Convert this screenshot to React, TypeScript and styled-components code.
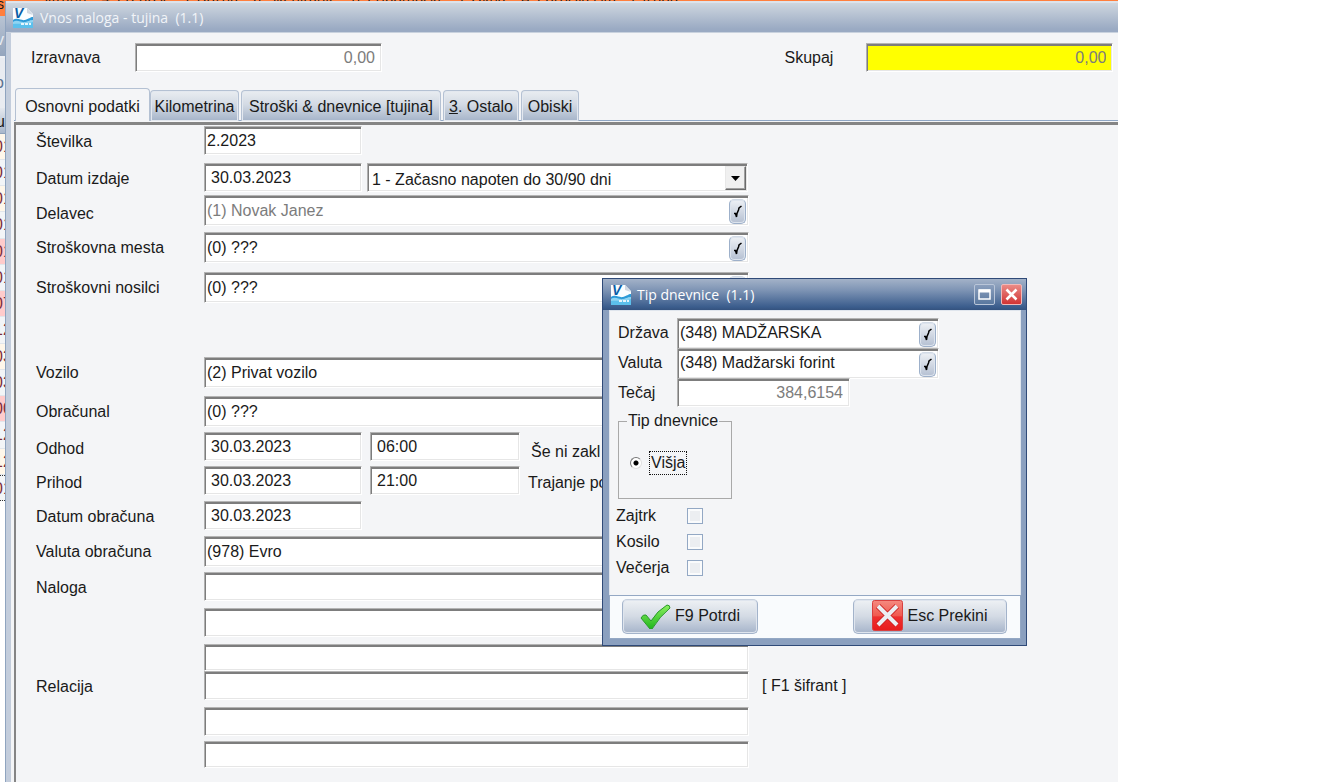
import React, { useId } from "react";
import styled, { createGlobalStyle, css } from "styled-components";

const Global = createGlobalStyle`
  * { box-sizing: border-box; }
  body { margin: 0; background: #fff; }
  body, input, select, button, legend {
    font-family: "Liberation Sans", Arial, sans-serif;
    font-size: 16px;
    line-height: 20px;
    color: #1a1a1a;
  }
`;

const Screen = styled.div`
  display: flex;
  flex-direction: column;
  width: 84.35%;
  min-height: 100vh;
  position: relative;
`;

const MenuStrip = styled.nav`
  display: flex;
  gap: 15px;
  align-items: flex-end;
  height: 1px;
  padding-left: 40px;
  overflow: hidden;
  background: #ff7f3e;
  font-family: "Open Sans", sans-serif;
  font-size: 14px;
  line-height: 6px;
  white-space: nowrap;
`;

const Workspace = styled.div`
  flex: 1;
  display: flex;
`;

const Behind = styled.div`
  width: 5px;
  flex: none;
  overflow: hidden;
  white-space: nowrap;
`;

const BehindMenu = styled.div`
  height: 15px;
  background: #ff7f3e;
  font-size: 14px;
  line-height: 7px;
  text-indent: -3px;
`;

const BehindTitle = styled.div`
  height: 42px;
  border-bottom: 2px solid #eef1f5;
  background: linear-gradient(#b9c4d3, #94a5bd);
  color: #e8edf3;
  text-indent: -4px;
  line-height: 48px;
`;

const BehindBar = styled.div`
  height: 50px;
  background: #e9ecf1;
  color: #5a7290;
  text-indent: -5px;
  line-height: 50px;
`;

const BehindHead = styled.div`
  height: 26px;
  background: linear-gradient(#e4e8ee, #a9b7cb);
  border-bottom: 1px solid #8ea1b9;
  text-indent: -4px;
  line-height: 28px;
`;

const tones = { cream: "#fff7ea", plain: "#f3f5f7", pink: "#ffcbcb" };

const BehindRow = styled.div<{ $tone: keyof typeof tones }>`
  height: 26px;
  background: ${(p) => tones[p.$tone]};
  border-bottom: 1px solid #e2e6eb;
  color: #7c2c3a;
  text-indent: -6px;
  line-height: 26px;
  &:nth-child(4n) {
    height: 27px;
  }
  &:last-child {
    border-top: 1px dotted #333;
    border-bottom: 1px dotted #333;
  }
`;

const MainWindow = styled.section`
  flex: 1;
  min-width: 0;
  display: flex;
  flex-direction: column;
  border-left: 1px solid #8fa4bf;
`;

const TitleBar = styled.header<{ $active?: boolean }>`
  display: flex;
  align-items: center;
  gap: 7px;
  font-family: "Open Sans", "Noto Sans", sans-serif;
  font-size: 14px;
  white-space: pre;
  ${(p) =>
    p.$active
      ? css`
          height: 31px;
          gap: 6px;
          padding: 0 4px 0 8px;
          color: #fff;
          background: linear-gradient(#a3b2c8, #7f95b5 35%, #3b5d8d 90%, #34527f);
        `
      : css`
          height: 32px;
          padding: 0 7px;
          color: #f1f4f8;
          border-top: 2px solid #dde3eb;
          border-bottom: 1px solid #c9d2de;
          background: linear-gradient(#ced6df, #9aaac3 90%);
        `}
`;

const Caption = styled.h1`
  flex: 1;
  margin: 0;
  font-size: 14px;
  font-weight: 400;
`;

const Body = styled.div`
  flex: 1;
  display: flex;
  flex-direction: column;
  border-left: 5px solid #c3cddc;
  background: #f4f5f7;
  padding: 10px 0 0 3px;
`;

const Totals = styled.div`
  display: flex;
  justify-content: space-between;
  padding: 0 5px 0 17px;
`;

const Total = styled.div<{ $label: number }>`
  display: flex;
  align-items: center;
  label {
    width: ${(p) => p.$label}px;
  }
`;

const sunken = css`
  border: 1px solid;
  border-color: #b4b4b4 #fff #fff #b0b0b0;
  box-shadow: inset 1px 2px 0 #7d7d7d, inset -1px -1px 0 #e6e6e6;
  background: #fff;
  border-radius: 0;
`;

const Input = styled.input<{
  $w: number;
  $dim?: boolean;
  $right?: boolean;
  $indent?: number;
  $yellow?: boolean;
  $h?: number;
}>`
  ${sunken}
  width: ${(p) => p.$w}px;
  height: ${(p) => p.$h ?? 29}px;
  padding: 2px 6px 2px ${(p) => p.$indent ?? 2}px;
  outline: 0;
  ${(p) => p.$dim && "color: #7c7c7c;"}
  ${(p) => p.$right && "text-align: right;"}
  ${(p) => p.$yellow && "background: #ff0;"}
`;

const LookupBox = styled.div<{ $w: number }>`
  ${sunken}
  display: flex;
  align-items: center;
  width: ${(p) => p.$w}px;
  height: 31px;
  padding: 2px 2px 0 2px;
`;

const LookupInput = styled.input<{ $dim?: boolean }>`
  flex: 1;
  min-width: 0;
  border: 0;
  outline: 0;
  padding: 0 0 2px;
  background: none;
  color: ${(p) => (p.$dim ? "#7c7c7c" : "#1a1a1a")};
`;

const LookupButton = styled.button`
  display: flex;
  align-items: center;
  justify-content: center;
  width: 17px;
  height: 25px;
  padding: 0;
  border: 1px solid #9db0ca;
  border-top-color: #d2dae5;
  border-radius: 5px;
  background: linear-gradient(#eef1f5, #b5c0d2);
  box-shadow: inset 0 0 0 1px #dde4ed;
`;

const Tabs = styled.div`
  display: flex;
  align-items: flex-end;
  height: 33px;
  margin-top: 16px;
  padding-left: 1px;
  gap: 2px;
  box-shadow: inset 0 -1px 0 #90a7c5;
`;

const Tab = styled.button<{ $w: number; $active?: boolean }>`
  height: 31px;
  min-width: ${(p) => p.$w}px;
  padding: 2px 2px 0;
  border: 1px solid #b4c1d3;
  border-bottom: 0;
  border-radius: 4px 4px 0 0;
  background: linear-gradient(#e9edf1, #d3dae4 45%, #a5b4c9);
  box-shadow: inset 0 0 0 1px #e3e8ef;
  white-space: nowrap;
  ${(p) =>
    p.$active &&
    css`
      height: 33px;
      padding: 4px 2px 0;
      margin-right: -2px;
      background: #f4f5f7;
      box-shadow: none;
    `}
`;

const Panel = styled.main`
  flex: 1;
  margin-top: 1px;
  padding: 1px 0 0 20px;
  border: 0 solid #858585;
  border-width: 3px 0 0 2px;
`;

const Row = styled.div<{ $gap?: number; $h?: number }>`
  display: flex;
  align-items: center;
  height: ${(p) => p.$h ?? 29}px;
  margin-top: ${(p) => p.$gap ?? 0}px;
`;

const Label = styled.label<{ $drop?: number }>`
  width: 168px;
  padding-top: ${(p) => p.$drop ?? 2}px;
  flex: none;
`;

const Pair = styled.div<{ $gap: number }>`
  display: flex;
  align-items: center;
  gap: ${(p) => p.$gap}px;
`;

const Note = styled.span<{ $left: number; $drop?: number }>`
  padding: ${(p) => p.$drop ?? 4}px 0 0 ${(p) => p.$left}px;
  white-space: pre;
`;

const SelectBox = styled.div`
  ${sunken}
  display: flex;
  width: 381px;
  height: 29px;
  padding: 3px 1px 0 1px;
  position: relative;
`;

const Select = styled.select`
  appearance: none;
  width: 100%;
  border: 0;
  outline: 0;
  background: none;
  padding: 2px 24px 0 3px;
`;

const Arrow = styled.span`
  position: absolute;
  right: 1px;
  top: 2px;
  display: flex;
  align-items: center;
  justify-content: center;
  width: 21px;
  height: 24px;
  pointer-events: none;
  background: #f0f0f0;
  border: 1px solid;
  border-color: #e8e8e8 #6b6b6b #6b6b6b #e8e8e8;
  box-shadow: inset -1px -1px 0 #a0a0a0;
`;

const Dialog = styled.section`
  position: absolute;
  left: 602px;
  top: 278px;
  width: 425px;
  border: 1px solid #2f4a78;
  background: #8ba0bf;
`;

const WindowButton = styled.button<{ $close?: boolean }>`
  display: flex;
  align-items: center;
  justify-content: center;
  width: 21px;
  height: 21px;
  padding: 0;
  border: 1px solid ${(p) => (p.$close ? "#f0b9b9" : "#b9c5d8")};
  border-radius: 2px;
  background: ${(p) =>
    p.$close ? "linear-gradient(#ea8a86, #d23434)" : "linear-gradient(#8b9fbd, #5a789f)"};
`;

const DialogInner = styled.div`
  margin: 0 5px 6px 6px;
  background: #f4f5f7;
  border: 1px solid #dfe5ed;
`;

const DialogForm = styled.div`
  padding: 7px 0 14px 8px;
`;

const DialogLabel = styled.label`
  width: 59px;
`;

const Group = styled.fieldset`
  width: 114px;
  height: 88px;
  margin: 4px 0 0;
  padding: 21px 0 0 11px;
  border: 1px solid #a9a9a9;
  legend {
    padding: 0 1px;
    margin-left: -3px;
  }
`;

const RadioLabel = styled.label`
  display: flex;
  align-items: center;
  gap: 8px;
  span {
    outline: 1px dotted #111;
    padding: 1px;
  }
`;

const Radio = styled.input`
  appearance: none;
  width: 12px;
  height: 12px;
  margin: 0;
  border: 1px solid;
  border-color: #777 #e0e0e0 #e0e0e0 #777;
  border-radius: 50%;
  background: radial-gradient(circle, #000 0 2px, #fff 3px);
`;

const Checks = styled.div`
  margin: 4px 0 0 -2px;
`;

const CheckRow = styled.div`
  display: flex;
  align-items: center;
  height: 26px;
  label {
    width: 71px;
  }
`;

const Check = styled.input`
  appearance: none;
  width: 16px;
  height: 16px;
  margin: 0;
  border: 1px solid #93a8c4;
  background: #eceef1;
  box-shadow: inset 0 0 0 2px #fafbfc;
`;

const Footer = styled.footer`
  display: flex;
  justify-content: space-between;
  padding: 3px 13px 4px 12px;
  border: 1px solid #94a8c4;
  margin: 0 -1px -1px;
  background: #f9fbfd;
`;

const Action = styled.button<{ $w: number }>`
  display: flex;
  align-items: center;
  justify-content: center;
  gap: 4px;
  width: ${(p) => p.$w}px;
  height: 35px;
  padding: 0 0 2px;
  border: 1px solid #a3b3ca;
  border-top-color: #c5cfdd;
  border-radius: 5px;
  background: linear-gradient(#eef1f4, #d3dae4 50%, #a6b4ca);
  box-shadow: inset 0 0 0 1px #dfe5ee;
  white-space: nowrap;
`;

const Logo = () => (
  <svg width="20" height="20" viewBox="0 0 20 20" aria-hidden="true">
    <path d="M0 0H14L20 6V20H0Z" fill="#fbfdff" />
    <path d="M14 0L20 7L14 5Z" fill="#cfd8e2" />
    <path d="M0 12C5 9 8 13 12 12S17 9 20 9V20H0Z" fill="#2d9bd8" />
    <path d="M0 14C5 11 8 15 12 14S17 12 20 12V20H0Z" fill="#8fd4f2" />
    <path d="M0 16C6 15 12 17 20 14V20H0Z" fill="#5cc0ec" />
    <text x="1" y="10" fontSize="14" fontWeight="700" fontStyle="italic" fill="#0a5fa8" fontFamily="Liberation Sans">V</text>
    <path d="M8 16H18" stroke="#e6f6fd" strokeWidth="2" strokeDasharray="3 1" />
  </svg>
);

const Tick = () => (
  <svg width="9" height="13" viewBox="0 0 9 13" fill="none" stroke="#000" aria-hidden="true">
    <path d="M1 8.5H2.5L3.5 12L4 8.5L5.5 5L6 3L8.5 1" strokeWidth="1.5" />
  </svg>
);

type LookupProps = { id: string; value: string; dim?: boolean; w?: number };
const Lookup = ({ id, value, dim, w = 545 }: LookupProps) => (
  <LookupBox $w={w}>
    <LookupInput id={id} defaultValue={value} $dim={dim} />
    <LookupButton type="button" aria-label="Izberi">
      <Tick />
    </LookupButton>
  </LookupBox>
);

type LookupRowProps = { label: string; value: string; gap: number; dim?: boolean; drop?: number };
const LookupRow = ({ label, value, gap, dim, drop = 0 }: LookupRowProps) => {
  const id = useId();
  return (
    <Row $gap={gap} $h={31}>
      <Label htmlFor={id} $drop={drop}>{label}</Label>
      <Lookup id={id} value={value} dim={dim} />
    </Row>
  );
};

type TextRowProps = { label?: string; gap: number; note?: string; h?: number };
const TextRow = ({ label = "", gap, note, h = 29 }: TextRowProps) => {
  const id = useId();
  return (
    <Row $gap={gap} $h={h}>
      <Label htmlFor={id}>{label}</Label>
      <Input id={id} $w={545} $h={h} />
      {note && <Note $left={13} $drop={0}>{note}</Note>}
    </Row>
  );
};

type TripRowProps = { label: string; gap: number; time: string; note: string; left: number; drop: number };
const TripRow = ({ label, gap, time, note, left, drop }: TripRowProps) => {
  const id = useId();
  return (
    <Row $gap={gap}>
      <Label htmlFor={id} $drop={4}>{label}</Label>
      <Pair $gap={8}>
        <Input id={id} $w={158} $indent={6} defaultValue="30.03.2023" />
        <Input $w={150} $indent={6} defaultValue={time} aria-label={label} />
      </Pair>
      <Note $left={left} $drop={drop}>{note}</Note>
    </Row>
  );
};

const menu = ["Šifranti", "4. Prenosi", "5. Dozna", "6. Skeniranje", "8. Pripomočki", "9. Okna", "A. Poročila ista", "I. Izhod"];

const behindRows: [string, keyof typeof tones][] = [
  ["01", "cream"], ["01", "plain"], ["01", "cream"], ["01", "plain"], ["01", "pink"],
  ["01", "plain"], ["07", "pink"], ["12", "plain"], ["03", "cream"], ["03", "plain"],
  ["00", "pink"], ["12", "plain"], ["12", "cream"], ["01", "plain"],
];

export default function App() {
  return (
    <>
      <Global />
      <Screen>
        <MenuStrip>
          {menu.map((m) => (
            <span key={m}>{m}</span>
          ))}
        </MenuStrip>
        <Workspace>
          <Behind>
            <BehindMenu>s</BehindMenu>
            <BehindTitle>v</BehindTitle>
            <BehindBar>o</BehindBar>
            <BehindHead>u</BehindHead>
            {behindRows.map(([text, tone], i) => (
              <BehindRow key={i} $tone={tone}>{text}</BehindRow>
            ))}
          </Behind>
          <MainWindow>
            <TitleBar>
              <Logo />
              <Caption>{"Vnos naloga - tujina  (1.1)"}</Caption>
            </TitleBar>
            <Body>
              <Totals>
                <Total $label={104}>
                  <label htmlFor="izravnava">Izravnava</label>
                  <Input id="izravnava" $w={247} $dim $right defaultValue="0,00" />
                </Total>
                <Total $label={82}>
                  <label htmlFor="skupaj">Skupaj</label>
                  <Input id="skupaj" $w={247} $dim $right $yellow defaultValue="0,00" />
                </Total>
              </Totals>
              <Tabs role="tablist">
                <Tab type="button" role="tab" $w={135} $active>Osnovni podatki</Tab>
                <Tab type="button" role="tab" $w={89}>Kilometrina</Tab>
                <Tab type="button" role="tab" $w={200}>Stroški &amp; dnevnice [tujina]</Tab>
                <Tab type="button" role="tab" $w={76}><u>3</u>. Ostalo</Tab>
                <Tab type="button" role="tab" $w={58}>Obiski</Tab>
              </Tabs>
              <Panel>
                <Row>
                  <Label htmlFor="stevilka">Številka</Label>
                  <Input id="stevilka" $w={158} defaultValue="2.2023" />
                </Row>
                <Row $gap={8}>
                  <Label htmlFor="izdaja">Datum izdaje</Label>
                  <Pair $gap={5}>
                    <Input id="izdaja" $w={158} $indent={6} defaultValue="30.03.2023" />
                    <SelectBox>
                      <Select aria-label="Vrsta napotitve">
                        <option>1 - Začasno napoten do 30/90 dni</option>
                      </Select>
                      <Arrow>
                        <svg width="9" height="5" viewBox="0 0 9 5" aria-hidden="true">
                          <path d="M0 0H9L4.5 5Z" />
                        </svg>
                      </Arrow>
                    </SelectBox>
                  </Pair>
                </Row>
                <LookupRow label="Delavec" value="(1) Novak Janez" gap={3} dim drop={6} />
                <LookupRow label="Stroškovna mesta" value="(0) ???" gap={6} />
                <LookupRow label="Stroškovni nosilci" value="(0) ???" gap={9} />
                <LookupRow label="Vozilo" value="(2) Privat vozilo" gap={54} />
                <LookupRow label="Obračunal" value="(0) ???" gap={8} />
                <TripRow label="Odhod" gap={5} time="06:00" note="Še ni zakl" left={11} drop={10} />
                <TripRow label="Prihod" gap={5} time="21:00" note="Trajanje po" left={8} drop={4} />
                <Row $gap={6}>
                  <Label htmlFor="obracun">Datum obračuna</Label>
                  <Input id="obracun" $w={158} $indent={6} defaultValue="30.03.2023" />
                </Row>
                <LookupRow label="Valuta obračuna" value="(978) Evro" gap={6} />
                <TextRow label="Naloga" gap={5} />
                <TextRow gap={7} />
                <TextRow gap={7} h={27} />
                <TextRow label="Relacija" gap={0} note="[ F1 šifrant ]" />
                <TextRow gap={7} />
                <TextRow gap={5} h={27} />
              </Panel>
            </Body>
          </MainWindow>
        </Workspace>
        <Dialog role="dialog" aria-label="Tip dnevnice">
          <TitleBar $active>
            <Logo />
            <Caption>{"Tip dnevnice  (1.1)"}</Caption>
            <WindowButton type="button" aria-label="Povečaj">
              <svg width="13" height="11" viewBox="0 0 13 11" aria-hidden="true">
                <path d="M1 1H12V10H1Z" fill="none" stroke="#fff" strokeWidth="1.5" />
                <path d="M1 2H12" stroke="#fff" strokeWidth="3" />
              </svg>
            </WindowButton>
            <WindowButton type="button" $close aria-label="Zapri">
              <svg width="13" height="13" viewBox="0 0 13 13" aria-hidden="true">
                <path d="M1.5 1.5L11.5 11.5M11.5 1.5L1.5 11.5" stroke="#fff" strokeWidth="2.6" />
              </svg>
            </WindowButton>
          </TitleBar>
          <DialogInner>
            <DialogForm>
              <Row $h={30}>
                <DialogLabel htmlFor="drzava">Država</DialogLabel>
                <Lookup id="drzava" value="(348) MADŽARSKA" w={262} />
              </Row>
              <Row $h={30}>
                <DialogLabel htmlFor="valuta">Valuta</DialogLabel>
                <Lookup id="valuta" value="(348) Madžarski forint" w={262} />
              </Row>
              <Row>
                <DialogLabel htmlFor="tecaj">Tečaj</DialogLabel>
                <Input id="tecaj" $w={173} $dim $right defaultValue="384,6154" />
              </Row>
              <Group>
                <legend>Tip dnevnice</legend>
                <RadioLabel>
                  <Radio type="radio" name="tip" defaultChecked />
                  <span>Višja</span>
                </RadioLabel>
              </Group>
              <Checks>
                {["Zajtrk", "Kosilo", "Večerja"].map((m) => (
                  <CheckRow key={m}>
                    <label htmlFor={m}>{m}</label>
                    <Check type="checkbox" id={m} />
                  </CheckRow>
                ))}
              </Checks>
            </DialogForm>
            <Footer>
              <Action type="button" $w={136}>
                <svg width="31" height="26" viewBox="0 0 31 24" aria-hidden="true">
                  <defs>
                    <linearGradient id="tick" x1="0" y1="0" x2="0" y2="1">
                      <stop offset="0" stopColor="#8cf060" />
                      <stop offset="1" stopColor="#1fb51c" />
                    </linearGradient>
                  </defs>
                  <path d="M1 14Q3 10 6 11L11 17Q17 7 27 1Q30 1 30 4Q20 12 12 25H10Z" fill="url(#tick)" stroke="#2b9a2b" strokeLinejoin="round" />
                </svg>
                F9 Potrdi
              </Action>
              <Action type="button" $w={154}>
                <svg width="31" height="31" viewBox="0 0 31 31" aria-hidden="true">
                  <defs>
                    <linearGradient id="cross" x1="0" y1="0" x2="0" y2="1">
                      <stop offset="0" stopColor="#f58a80" />
                      <stop offset=".5" stopColor="#f05a50" />
                      <stop offset=".55" stopColor="#ee3030" />
                      <stop offset="1" stopColor="#e81c1c" />
                    </linearGradient>
                  </defs>
                  <rect x=".5" y=".5" width="30" height="30" rx="2" fill="url(#cross)" stroke="#d84040" />
                  <path d="M6 6L25 25M25 6L6 25" stroke="#c22" strokeWidth="6" />
                  <path d="M6 6L25 25M25 6L6 25" stroke="#eceef2" strokeWidth="4" />
                </svg>
                Esc Prekini
              </Action>
            </Footer>
          </DialogInner>
        </Dialog>
      </Screen>
    </>
  );
}
